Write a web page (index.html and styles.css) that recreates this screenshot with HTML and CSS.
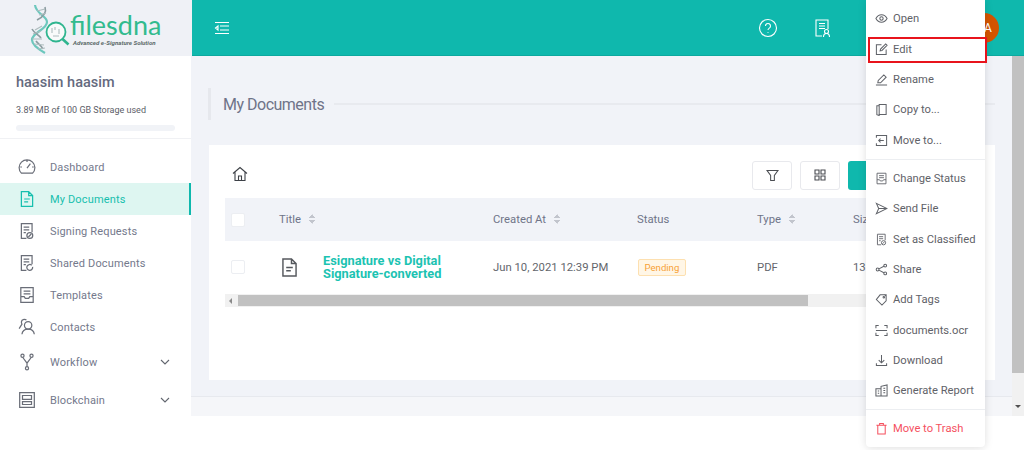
FILE: index.html
```html
<!DOCTYPE html>
<html lang="en">

<head>
    <meta charset="UTF-8">
    <meta name="viewport" content="width=device-width, initial-scale=1.0">
    <title>My Documents</title>
    <link rel="stylesheet" href="styles.css">
</head>

<body>

    <svg class="icon-defs" width="0" height="0">
        <symbol id="i-doc" viewBox="0 0 16 16"><path d="M3 1.500h6.500L13 5v9.500H3z M9.500 1.500V5H13 M5.500 8h5 M5.500 10.500h3.500"/></symbol>
        <symbol id="i-sign" viewBox="0 0 16 16"><path d="M7.500 14.500H3v-13h9.500v7.500 M5 4.500h5 M5 7h5 M5 9.500h2"/><circle cx="10.500" cy="12" r="2.600"/><path d="M9.200 13.300l2.600-2.600"/></symbol>
        <symbol id="i-share" viewBox="0 0 16 16"><path d="M7.500 14.500H3v-13h9.500v7.500 M5 4.500h5 M5 7h5 M5 9.500h2"/><path d="M13 11.500a2.600 2.600 0 1 1-.8-1.500"/></symbol>
        <symbol id="i-template" viewBox="0 0 16 16"><path d="M2.500 1.500h11v13h-11z M5 4.500h6 M5 7h6 M2.500 9.500h3l1 1.500h3l1-1.500h3"/></symbol>
    </svg>

    <div class="topbar">
        <div class="logo-box">
            <svg class="logo-mark" width="42" height="52" viewBox="0 0 42 52">
                <path class="helix-a" d="M6 1c1 9 12 11 12 17 0 8-15 10-15 18 0 5 6 9 13 13"/>
                <path class="helix-b" d="M16 3c2 6-2 10-8 13 M3 25c2 4 7 6 9 9 M7 37c2 3 5 4 7 8"/>
                <path class="helix-c" d="M8 7l8-2 M10 11l7-2 M6 26l7-4 M4 30l8-3 M3 35l10 0 M5 40l10 1 M9 45l7-1"/>
                <circle class="lens" cx="27" cy="28" r="9.500"/>
                <path class="lens-bits" d="M23 24v5 M26 23v3 M30 25v5 M24 32h6"/>
                <path class="lens-handle" d="M33.500 35l6 5.500"/>
            </svg>
            <div class="logo-text">
                <span class="logo-name">filesdna</span>
                <span class="logo-sub">Advanced e-Signature Solution</span>
            </div>
        </div>
        <header class="header">
            <svg class="menu-toggle" width="16" height="14" viewBox="0 0 16 14"><path d="M1 1.500h14 M6 5h9 M6 9h9 M1 12.500h14 M4 5L1.500 7 4 9z"/></svg>
            <div class="header-right">
                <svg class="head-icon" width="20" height="20" viewBox="0 0 20 20"><circle cx="10" cy="10" r="8.500"/><path d="M7.500 8a2.500 2.500 0 1 1 3.800 2.100c-.9.6-1.300 1-1.300 2 M10 14v.8"/></svg>
                <svg class="head-icon cert" width="18" height="20" viewBox="0 0 18 20"><path d="M8 18H2V2h12v9 M5 5.500h6 M5 8h6 M5 10.500h6"/><circle cx="12.500" cy="13.500" r="2"/><path d="M9.500 19c0-2.500 1-3.500 3-3.500s3 1 3 3.500"/></svg>
                <div class="avatar">A</div>
            </div>
        </header>
    </div>

    <div class="layout">
        <aside class="sidebar">
            <div class="user-box">
                <div class="user-name">haasim haasim</div>
                <div class="user-storage">3.89 MB of 100 GB Storage used</div>
                <div class="storage-bar"></div>
            </div>
            <nav class="nav">
                <a class="nav-item">
                    <svg class="nav-icon" viewBox="0 0 16 16"><path d="M3 13.500a7 7 0 1 1 10 0z M8 9l3-4 M3.500 8H2 M14 8h-1.500 M8 3.500V2"/></svg>
                    Dashboard
                </a>
                <a class="nav-item active">
                    <svg class="nav-icon"><use href="#i-doc"/></svg>
                    My Documents
                </a>
                <a class="nav-item">
                    <svg class="nav-icon"><use href="#i-sign"/></svg>
                    Signing Requests
                </a>
                <a class="nav-item">
                    <svg class="nav-icon"><use href="#i-share"/></svg>
                    Shared Documents
                </a>
                <a class="nav-item">
                    <svg class="nav-icon"><use href="#i-template"/></svg>
                    Templates
                </a>
                <a class="nav-item">
                    <svg class="nav-icon" viewBox="0 0 16 16"><circle cx="9" cy="6.500" r="3.300"/><path d="M3.500 14.500c.3-3 2.300-4.700 5.500-4.700s5.200 1.700 5.500 4.700 M7.500 1.800A3 3 0 0 0 4.600 1.500C3 2 2.600 4 3.500 5.500L1 9.500"/></svg>
                    Contacts
                </a>
                <a class="nav-item group workflow">
                    <svg class="nav-icon" viewBox="0 0 16 16"><circle cx="4" cy="2.500" r="1.400"/><circle cx="12" cy="2.500" r="1.400"/><circle cx="8" cy="13.500" r="1.400"/><path d="M4.300 4L8 9l3.700-5 M8 9v3"/></svg>
                    Workflow
                    <svg class="chevron" width="10" height="6" viewBox="0 0 10 6"><path d="M1 1l4 4 4-4"/></svg>
                </a>
                <a class="nav-item group blockchain">
                    <svg class="nav-icon" viewBox="0 0 16 16"><path d="M1.500 1.500h13v13h-13z M4 4h8v3.500H4z M4 9.500h8V12H4z"/></svg>
                    Blockchain
                    <svg class="chevron" width="10" height="6" viewBox="0 0 10 6"><path d="M1 1l4 4 4-4"/></svg>
                </a>
            </nav>
        </aside>

        <main class="content">
            <div class="page-area">
                <div class="page-title">
                    <h1>My Documents</h1>
                    <span class="title-line"></span>
                </div>
                <section class="card">
                    <div class="toolbar">
                        <svg class="home-icon" width="16" height="16" viewBox="0 0 16 16"><path d="M1 7.500L8 1.500l7 6 M3 6v8.500h10V6 M6.500 14.500V10h3v4.500"/></svg>
                        <div class="toolbar-btns">
                            <button class="tool-btn"><svg width="13" height="13" viewBox="0 0 14 14"><path d="M1 1.500h12L9 7v5.500H5V7z"/></svg></button>
                            <button class="tool-btn"><svg width="12" height="12" viewBox="0 0 12 12"><path d="M1 1h4v4H1z M7 1h4v4H7z M1 7h4v4H1z M7 7h4v4H7z"/></svg></button>
                            <button class="primary-btn"></button>
                        </div>
                    </div>
                    <table class="doc-table">
                        <colgroup>
                            <col class="col-check">
                            <col class="col-title">
                            <col class="col-date">
                            <col class="col-status">
                            <col class="col-type">
                            <col>
                        </colgroup>
                        <thead>
                            <tr>
                                <th><span class="checkbox"></span></th>
                                <th>Title <span class="sort"></span></th>
                                <th>Created At <span class="sort"></span></th>
                                <th>Status</th>
                                <th>Type <span class="sort"></span></th>
                                <th>Size</th>
                            </tr>
                        </thead>
                        <tbody>
                            <tr>
                                <td><span class="checkbox"></span></td>
                                <td>
                                    <div class="title-cell">
                                        <svg class="file-icon"><use href="#i-doc"/></svg>
                                        <a class="doc-link">Esignature vs Digital Signature-converted</a>
                                    </div>
                                </td>
                                <td>Jun 10, 2021 12:39 PM</td>
                                <td><span class="badge">Pending</span></td>
                                <td>PDF</td>
                                <td>13</td>
                            </tr>
                        </tbody>
                    </table>
                    <div class="table-scroll">
                        <span class="arrow-left"></span>
                        <span class="table-thumb"></span>
                    </div>
                </section>
            </div>
            <footer class="footer"></footer>
        </main>

        <div class="page-scroll">
            <span class="page-thumb"></span>
            <span class="arrow-down"></span>
        </div>
    </div>

    <!-- Row actions menu -->
    <div class="menu">
        <a class="menu-item"><svg class="menu-icon" viewBox="0 0 14 14"><path d="M1 7c1.500-2.800 3.500-4 6-4s4.500 1.200 6 4c-1.500 2.800-3.500 4-6 4S2.500 9.800 1 7z"/><circle cx="7" cy="7" r="1.800"/></svg>Open</a>
        <a class="menu-item marked"><svg class="menu-icon" viewBox="0 0 14 14"><path d="M7 2H1.500v10.500H12V7 M5.500 8.500l.5-2L11.500 1 13 2.500 7.500 8z"/></svg>Edit</a>
        <a class="menu-item"><svg class="menu-icon" viewBox="0 0 14 14"><path d="M1 13h12 M3 10.500l.5-2.500L9.500 2 12 4.500 6 10.500z"/></svg>Rename</a>
        <a class="menu-item"><svg class="menu-icon" viewBox="0 0 14 14"><path d="M4.500 1.500H12v11H4.500z M4.500 3H2v9.500l2.500 1V3"/></svg>Copy to...</a>
        <a class="menu-item"><svg class="menu-icon" viewBox="0 0 14 14"><path d="M1.500 4V1.500h11v11h-11V10 M9.500 7H4 M6 5L4 7l2 2"/></svg>Move to...</a>
        <div class="menu-divider"></div>
        <a class="menu-item"><svg class="menu-icon" viewBox="0 0 14 14"><use href="#i-template"/></svg>Change Status</a>
        <a class="menu-item"><svg class="menu-icon" viewBox="0 0 14 14"><path d="M1.500 1.500L13 7 1.500 12.500 4 7z M4 7h9"/></svg>Send File</a>
        <a class="menu-item"><svg class="menu-icon" viewBox="0 0 14 14"><use href="#i-sign"/></svg>Set as Classified</a>
        <a class="menu-item"><svg class="menu-icon" viewBox="0 0 14 14"><circle cx="2.800" cy="7" r="1.500"/><circle cx="11" cy="2.800" r="1.500"/><circle cx="11" cy="11.200" r="1.500"/><path d="M4.200 6.300l5.400-2.800 M4.200 7.700l5.400 2.800"/></svg>Share</a>
        <a class="menu-item"><svg class="menu-icon" viewBox="0 0 14 14"><path d="M5.500 2H12v6.500l-4.500 4.500L1.500 7z M10 1.500l2.500 2.500"/><circle cx="9.500" cy="4.500" r=".8"/></svg>Add Tags</a>
        <a class="menu-item"><svg class="menu-icon" viewBox="0 0 14 14"><path d="M1 4.500V1.500h3 M10 1.500h3v3 M13 9.500v3h-3 M4 12.500H1v-3 M1 7h12"/></svg>documents.ocr</a>
        <a class="menu-item"><svg class="menu-icon" viewBox="0 0 14 14"><path d="M7 1v8 M4 6.500L7 9.500l3-3 M1.500 10v2.500h11V10"/></svg>Download</a>
        <a class="menu-item"><svg class="menu-icon" viewBox="0 0 14 14"><path d="M1 5h5.500v8H1z M6.500 13V2.500L13 1v12H6.500z M3 7.500h1.500 M3 10h1.500 M9 4.500h2 M9 7h2 M9 9.500h2"/></svg>Generate Report</a>
        <div class="menu-divider"></div>
        <a class="menu-item danger"><svg class="menu-icon" viewBox="0 0 14 14"><path d="M1.500 3.500h11 M5 3.500V1.500h4v2 M3 3.500v9.500h8V3.500"/></svg>Move to Trash</a>
    </div>

</body>

</html>
```

FILE: styles.css
```css
body {
    font-family: Roboto, "Liberation Sans", sans-serif;
    background-color: #fff;
    margin: 0;
    padding: 0;
    height: 450px;
    overflow: hidden;
    position: relative;
}

svg {
    fill: none;
    stroke: currentColor;
    stroke-width: 1.1;
}

.icon-defs {
    position: absolute;
}

/* Top bar */
.topbar {
    display: flex;
    height: 56px;
}

.logo-box {
    width: 192px;
    background-color: #eff1f6;
    display: flex;
    padding-left: 29px;
    box-sizing: border-box;
}

.logo-mark {
    margin-top: 4px;
    flex: none;
}

.helix-a {
    stroke: #6cc7bd;
    stroke-width: 2.2;
}

.helix-b {
    stroke: #8b9ca0;
    stroke-width: 1.6;
}

.helix-c {
    stroke: #aebcbe;
    stroke-width: 1.2;
}

.lens {
    stroke: #2fb58f;
    stroke-width: 1.8;
    fill: #f8fafa;
}

.lens-bits {
    stroke: #aebcbe;
}

.lens-handle {
    stroke: #2fb58f;
    stroke-width: 2.6;
}

.logo-text {
    display: flex;
    flex-direction: column;
    margin-left: -1px;
}

.logo-name {
    font-family: Lato, sans-serif;
    font-weight: 400;
    font-size: 27px;
    line-height: 28px;
    margin-top: 11px;
    color: #32bb8e;
}

.logo-sub {
    font-size: 6.1px;
    font-weight: 700;
    font-style: italic;
    color: #5d6b6a;
    margin-left: 3px;
    line-height: 8px;
    white-space: nowrap;
}

.header {
    flex: 1;
    background-color: #0fb8ad;
    box-shadow: inset 0 -1px 0 #0ca99f;
    display: flex;
    align-items: center;
    justify-content: space-between;
    color: #fff;
    padding: 0 25px 0 22px;
}

.header-right {
    display: flex;
    align-items: center;
}

.head-icon {
    margin-right: 36px;
}

.head-icon.cert {
    margin-right: 167px;
}

.avatar {
    width: 30px;
    height: 30px;
    box-sizing: border-box;
    padding-left: 8px;
    border-radius: 50%;
    background-color: #d35400;
    font-size: 12px;
    line-height: 30px;
    text-align: center;
    position: absolute;
    right: 25px;
    top: 13px;
}

/* Body */
.layout {
    display: flex;
    height: 360px;
}

.sidebar {
    width: 191px;
    flex: none;
    background-color: #fff;
}

.user-box {
    padding: 0 16px;
    height: 83px;
    box-sizing: border-box;
    border-bottom: 1px solid #f0f1f4;
}

.user-name {
    padding-top: 17px;
    font-size: 14.5px;
    font-weight: 500;
    line-height: 20px;
    color: #656a7e;
}

.user-storage {
    margin-top: 11px;
    font-size: 9px;
    line-height: 12px;
    color: #5c6068;
}

.storage-bar {
    margin-top: 9px;
    height: 6px;
    border-radius: 3px;
    background-color: #f1f3f7;
}

.nav {
    padding-top: 12px;
}

.nav-item {
    display: flex;
    align-items: center;
    height: 32px;
    padding-left: 18px;
    font-size: 11px;
    letter-spacing: 0.15px;
    color: #74798c;
}

.nav-icon {
    width: 18px;
    height: 18px;
    margin-right: 14px;
    flex: none;
    color: #6a6e78;
}

.nav-item.active {
    color: #17bfae;
    background-color: #def6f1;
    box-shadow: inset -2px 0 0 #0fb8ad;
}

.nav-item.active .nav-icon {
    color: #17bfae;
}

.nav-item.group {
    height: 38px;
}

.chevron {
    margin-left: auto;
    margin-right: 21px;
    color: #62666f;
}

/* Main content */
.content {
    flex: 1;
    min-width: 0;
    display: flex;
    flex-direction: column;
    background-color: #f1f3f8;
}

.page-area {
    flex: 1;
    padding: 32px 17px 0 18px;
}

.page-title {
    display: flex;
    align-items: center;
    height: 32px;
    margin-left: -1px;
    border-left: 3px solid #e6e8ed;
    padding-left: 12px;
}

.page-title h1 {
    margin: 0;
    font-size: 16px;
    font-weight: 400;
    letter-spacing: -0.5px;
    color: #6f7488;
}

.title-line {
    flex: 1;
    height: 2px;
    margin-left: 10px;
    background-color: #e8eaef;
}

.card {
    margin-top: 25px;
    height: 235px;
    background-color: #fff;
    padding: 0 16px;
}

.toolbar {
    display: flex;
    align-items: center;
    justify-content: space-between;
    height: 53px;
}

.home-icon {
    color: #3d4147;
    margin-left: 7px;
    margin-top: 4px;
}

.toolbar-btns {
    display: flex;
    gap: 8px;
    margin-top: 7px;
}

.tool-btn {
    width: 40px;
    height: 29px;
    padding: 0;
    background-color: #fff;
    border: 1px solid #e8e9ed;
    border-radius: 3px;
    color: #4a4d52;
    display: flex;
    align-items: center;
    justify-content: center;
}

.primary-btn {
    width: 40px;
    height: 29px;
    background-color: #0fb8ad;
    border: none;
    border-radius: 3px;
    margin-right: 91px;
}

.doc-table {
    width: 100%;
    table-layout: fixed;
    border-collapse: collapse;
    font-size: 11.3px;
}

.col-check {
    width: 54px;
}

.col-title {
    width: 214px;
}

.col-date {
    width: 144px;
}

.col-status {
    width: 120px;
}

.col-type {
    width: 96px;
}

.doc-table th {
    height: 43px;
    padding: 0;
    background-color: #f1f3f8;
    font-weight: 400;
    text-align: left;
    color: #6f7488;
}

.doc-table td {
    height: 52px;
    padding: 0;
    color: #63666c;
}

.checkbox {
    display: block;
    width: 12px;
    height: 12px;
    margin-left: 6px;
    background-color: #fff;
    border: 1px solid #eceef2;
    border-radius: 2px;
}

.sort {
    display: inline-block;
    width: 7px;
    height: 11px;
    margin-left: 5px;
    vertical-align: -2px;
    background:
        linear-gradient(to top right, transparent 50%, #c2c5cd 50%) 0 6px / 3.5px 4px no-repeat,
        linear-gradient(to top left, transparent 50%, #c2c5cd 50%) 3.5px 6px / 3.5px 4px no-repeat,
        linear-gradient(to bottom right, transparent 50%, #c2c5cd 50%) 0 0 / 3.5px 4px no-repeat,
        linear-gradient(to bottom left, transparent 50%, #c2c5cd 50%) 3.5px 0 / 3.5px 4px no-repeat;
}

.title-cell {
    display: flex;
    align-items: center;
}

.file-icon {
    width: 21px;
    height: 21px;
    margin-right: 23px;
    flex: none;
    color: #55585d;
}

.doc-link {
    font-weight: 700;
    font-size: 12.8px;
    line-height: 13px;
    color: #1cc3b2;
    width: 125px;
}

.badge {
    display: inline-block;
    margin-left: 1px;
    padding: 0 5.5px;
    height: 17px;
    line-height: 16px;
    box-sizing: border-box;
    font-size: 9.6px;
    color: #f7a237;
    background-color: #fff6e6;
    border: 1px solid #fde0b0;
    border-radius: 2px;
}

.table-scroll {
    display: flex;
    align-items: center;
    height: 13px;
    margin-top: 1px;
    background-color: #f1f1f1;
}

.arrow-left {
    width: 0;
    height: 0;
    margin-left: 4px;
    border: 3px solid transparent;
    border-left-width: 0;
    border-right: 3px solid #8a8a8a;
}

.table-thumb {
    width: 570px;
    height: 11px;
    margin-left: 6px;
    background-color: #c1c1c1;
}

.footer {
    height: 20px;
    background-color: #f5f6f9;
    border-top: 1px solid #e7e9ee;
    box-sizing: border-box;
}

.page-scroll {
    width: 12px;
    flex: none;
    display: flex;
    flex-direction: column;
    background-color: #f1f1f1;
}

.page-thumb {
    height: 317px;
    background-color: #c1c1c1;
}

.arrow-down {
    width: 0;
    height: 0;
    margin: 32px auto 0;
    border: 3px solid transparent;
    border-bottom-width: 0;
    border-top: 3px solid #505050;
}

/* Row actions menu */
.menu {
    position: absolute;
    left: 866px;
    top: 0;
    width: 119px;
    height: 447px;
    padding: 3.5px 0;
    box-sizing: border-box;
    background-color: #fff;
    border-radius: 0 0 4px 4px;
    box-shadow: 0 1px 8px rgba(0, 0, 0, 0.13);
}

.menu-item {
    position: relative;
    display: flex;
    align-items: center;
    height: 30.4px;
    padding-left: 9px;
    font-size: 11.2px;
    color: #5f6268;
    white-space: nowrap;
}

.menu-icon {
    width: 13px;
    height: 13px;
    margin-right: 5px;
    flex: none;
}

.menu-item.danger {
    color: #f5515f;
}

.menu-item.marked::after {
    content: "";
    position: absolute;
    left: 2px;
    right: -2px;
    top: 3px;
    bottom: 1px;
    border: 2px solid #e8141c;
}

.menu-divider {
    height: 1px;
    margin: 3.3px 0;
    background-color: #eceef1;
}
```
